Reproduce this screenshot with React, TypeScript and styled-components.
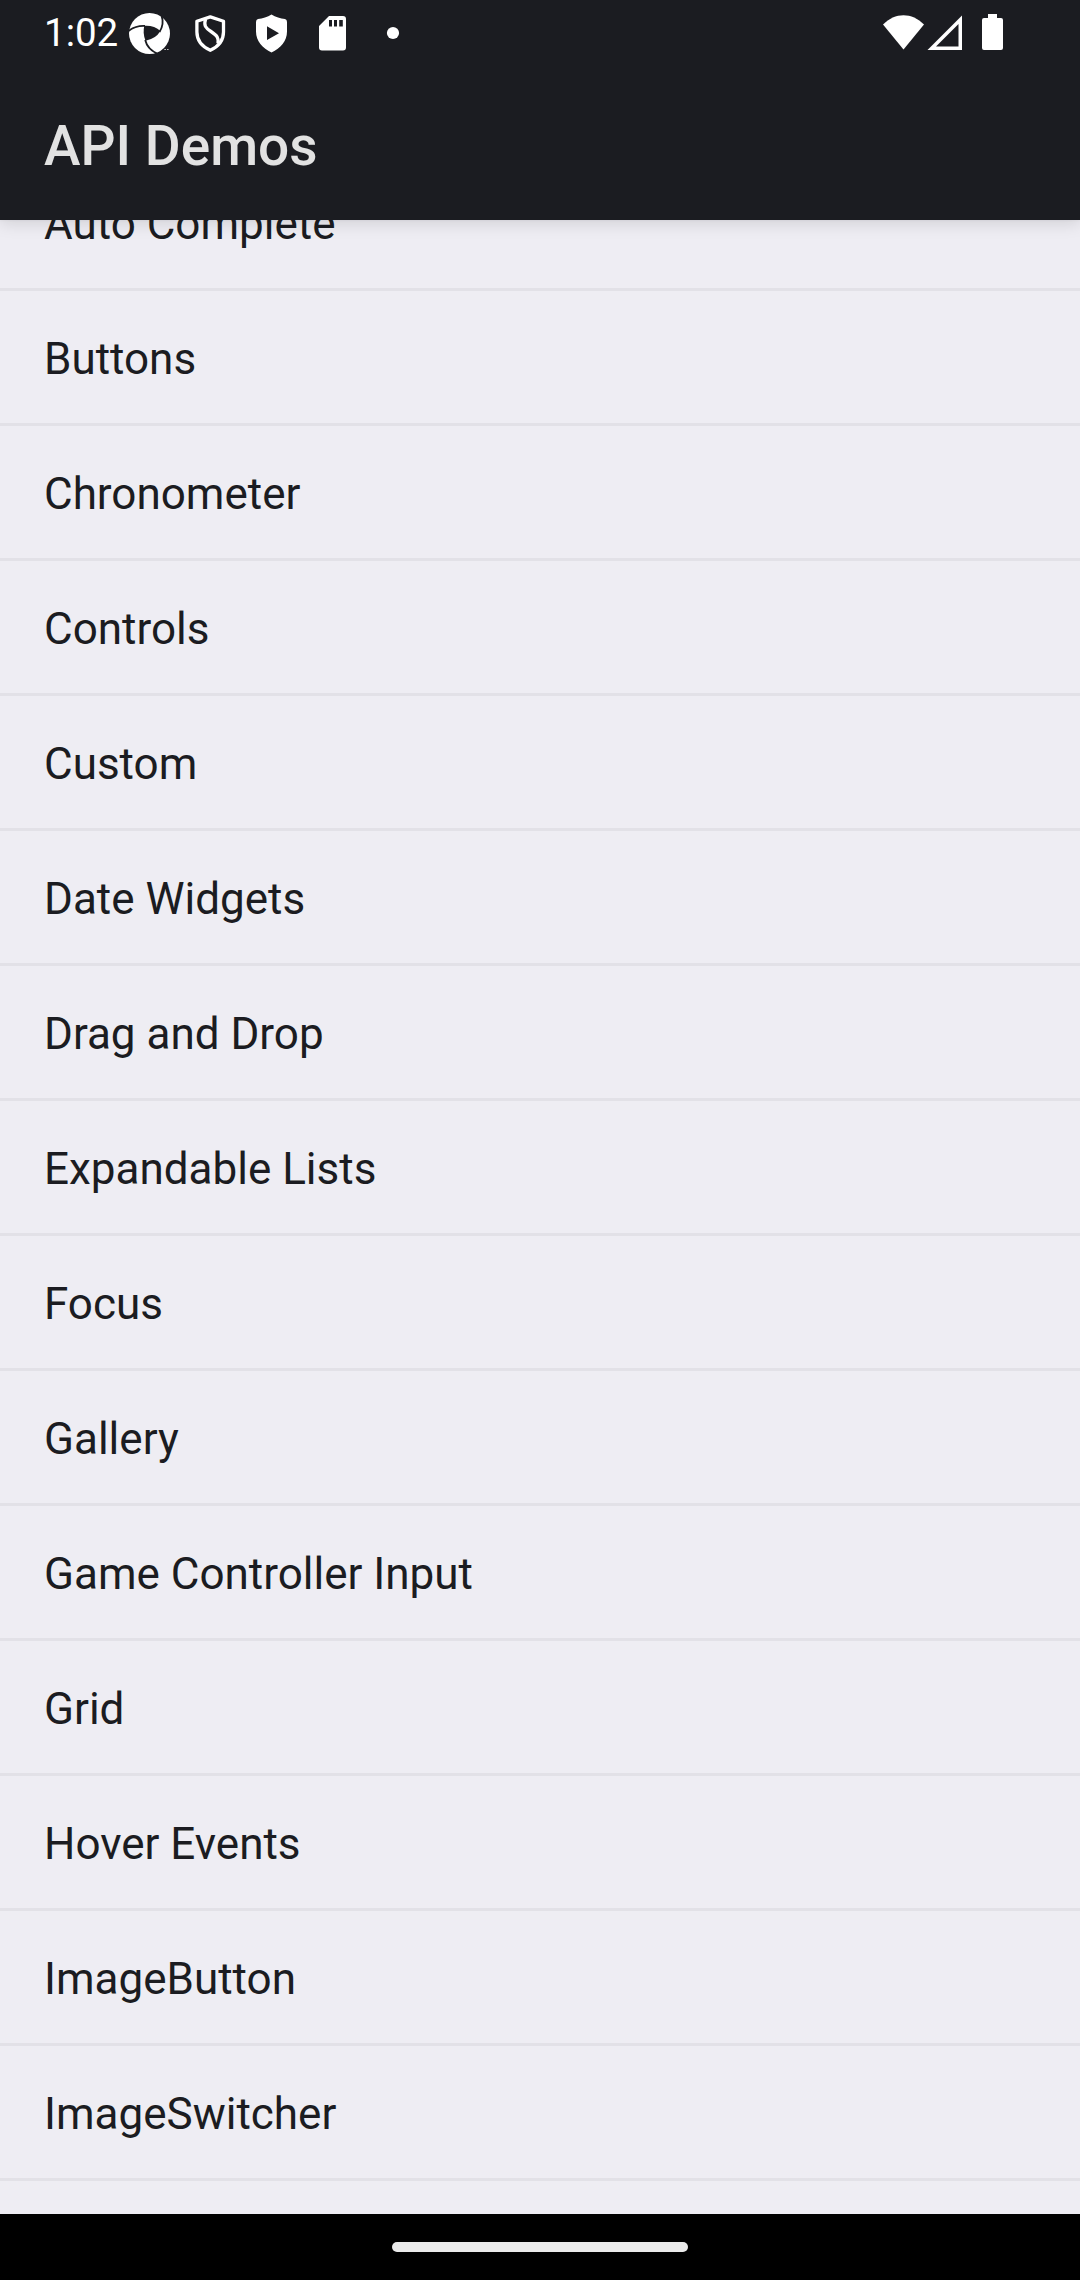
import React from "react";
import styled, { createGlobalStyle } from "styled-components";

const GlobalStyle = createGlobalStyle`
  body { margin: 0; background: #000; }
  * { box-sizing: border-box; }
`;

const Screen = styled.div`
  width: 1080px;
  height: 2280px;
  display: flex;
  flex-direction: column;
  overflow: hidden;
  font-family: Roboto, "Noto Sans", sans-serif;
`;

const Header = styled.header`
  flex: none;
  height: 220px;
  background: #1b1c21;
  box-shadow: 0 3px 16px rgba(0, 0, 0, 0.13), 0 0 3px rgba(0, 0, 0, 0.06);
  z-index: 1;
`;

const StatusBar = styled.div`
  height: 67px;
  display: flex;
  align-items: center;
  padding: 0 76px 0 44px;
  color: #fff;
`;

const Clock = styled.span`
  width: 85px;
  padding-bottom: 2px;
  font-size: 38.5px;
  line-height: 46px;
  white-space: nowrap;
`;

const Notifications = styled.div`
  display: flex;
  align-items: center;
  gap: 20px;
  svg { display: block; }
`;

const System = styled.div`
  margin-left: auto;
  display: flex;
  align-items: center;
  svg { display: block; }
`;

const TitleBar = styled.div`
  height: 153px;
  display: flex;
  align-items: center;
  padding: 5px 44px 0;
`;

const Title = styled.h1`
  margin: 0;
  color: #e2e2e2;
  font-size: 55px;
  font-weight: 500;
  line-height: 64px;
`;

const Viewport = styled.main`
  flex: 1;
  min-height: 0;
  overflow: hidden;
  background: #eeedf3;
`;

const List = styled.ul`
  list-style: none;
  margin: -64px 0 0;
  padding: 0;
`;

const Row = styled.li`
  height: 135px;
  display: flex;
  align-items: center;
  padding: 4px 44px 0;
  border-bottom: 3px solid #e2e1e7;
  color: #1b1c21;
  font-size: 44px;
  line-height: 52px;
`;

const NavBar = styled.nav`
  flex: none;
  height: 66px;
  background: #000;
  display: flex;
  align-items: center;
  justify-content: center;
`;

const HomeHandle = styled.div`
  width: 296px;
  height: 10px;
  border-radius: 5px;
  background: #ebebeb;
`;

const items = [
  "Auto Complete",
  "Buttons",
  "Chronometer",
  "Controls",
  "Custom",
  "Date Widgets",
  "Drag and Drop",
  "Expandable Lists",
  "Focus",
  "Gallery",
  "Game Controller Input",
  "Grid",
  "Hover Events",
  "ImageButton",
  "ImageSwitcher",
];

const AppiumLogo = () => (
  <svg width="41" height="41" viewBox="0 0 41 41" fill="none">
    <circle cx="20.500" cy="20.500" r="20.500" fill="#fff" />
    <path d="M15.300 12.700 Q25 12 31.500 18 Q26.500 26 16.500 27.700 Q13.500 20 15.300 12.700 Z" fill="#1b1c21" />
    <g stroke="#1b1c21" strokeWidth="1.800">
      <path d="M-1 18.500 Q6 12.500 16 13" />
      <path d="M32.600 3 Q35.500 11 30.500 19" />
      <path d="M29 41 Q18.500 36.500 16.200 27" />
    </g>
    <path d="M35.300 36.500 H37 M38 36.500 H39.600" stroke="#bbb" strokeWidth="1.200" />
  </svg>
);

const OutlineShield = () => (
  <svg width="41" height="41" viewBox="0 0 41 41" fill="none" stroke="#fff" strokeWidth="3.300" strokeLinejoin="round">
    <path d="M20.300 3.900 L33.500 8.300 V19 C33.500 27 28.500 33.500 20.300 37.300 C12 33.500 6.900 27 6.900 19 V8.300 Z" />
    <path d="M15.600 6 C13.500 12.500 15.500 15 21 18.500 C27 22.500 29 25 28 30.500" />
  </svg>
);

const PlayShield = () => (
  <svg width="41" height="41" viewBox="0 0 41 41" fill="#fff">
    <path fillRule="evenodd" d="M20.500 1.500 C24.500 4 29.500 5.400 34 6 Q36 6.500 36 9 V18.500 C36 28 29.500 35.500 20.500 39.500 C11.500 35.500 5 28 5 18.500 V9 Q5 6.500 7 6 C11.500 5.400 16.500 4 20.500 1.500 Z M16 13.300 V27 L28 20.200 Z" />
  </svg>
);

const SdCard = () => (
  <svg width="41" height="41" viewBox="0 0 41 41" fill="#fff">
    <path fillRule="evenodd" d="M17 3 H31 Q34 3 34 6 V34.500 Q34 37.500 31 37.500 H10 Q7 37.500 7 34.500 V13 Z M17 7 V13.600 H20 V7 Z M22 7 V13.600 H25 V7 Z M27.200 7 V13.600 H30.800 V7 Z" />
  </svg>
);

const MoreDot = () => (
  <svg width="41" height="41" viewBox="0 0 41 41" fill="#fff">
    <circle cx="20" cy="20" r="6.100" />
  </svg>
);

const SystemIcons = () => (
  <svg width="121" height="41" viewBox="0 0 121 41" fill="#fff">
    <path d="M0 11.500 C12 -1 29 -1 41 11.500 L20.500 36.500 Z" />
    <path fillRule="evenodd" d="M79 2.500 V37 H44.500 Z M75.500 11 V33.500 H53 Z" />
    <path d="M105 1 H114 V5 H118 Q120 5 120 7 V35 Q120 37 118 37 H101 Q99 37 99 35 V7 Q99 5 101 5 H105 Z" />
  </svg>
);

export default function App() {
  return (
    <Screen>
      <GlobalStyle />
      <Header>
        <StatusBar>
          <Clock>1:02</Clock>
          <Notifications>
            <AppiumLogo />
            <OutlineShield />
            <PlayShield />
            <SdCard />
            <MoreDot />
          </Notifications>
          <System>
            <SystemIcons />
          </System>
        </StatusBar>
        <TitleBar>
          <Title>API Demos</Title>
        </TitleBar>
      </Header>
      <Viewport>
        <List>
          {items.map((item) => (
            <Row key={item}>{item}</Row>
          ))}
        </List>
      </Viewport>
      <NavBar>
        <HomeHandle />
      </NavBar>
    </Screen>
  );
}
